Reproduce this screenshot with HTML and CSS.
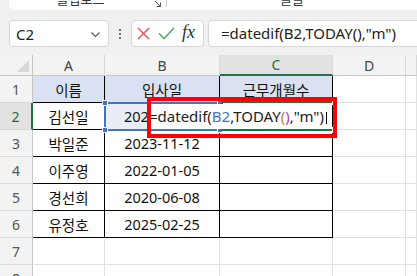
FILE: index.html
```html
<!DOCTYPE html>
<html lang="ko">
<head>
<meta charset="utf-8">
<link rel="stylesheet" href="styles.css">
</head>
<body>
<div class="ribbon">
  <div class="group clip">
    <span class="glabel">클립보드</span>
    <svg class="launcher" width="8" height="8" viewBox="0 0 8 8"><path d="M0.5 0.5 L0.5 0 M7.5 7.5 L2 2 M7.5 3.5 L7.5 7.5 L3.5 7.5" stroke="#555" stroke-width="1" fill="none"/></svg>
  </div>
  <div class="group font">
    <span class="glabel">글꼴</span>
  </div>
</div>

<div class="fbar">
  <div class="namebox">
    <span class="ref">C2</span>
    <svg class="chev" width="9" height="6" viewBox="0 0 9 6"><path d="M0.5 0.5 L4.5 4.5 L8.5 0.5" stroke="#555" stroke-width="1.1" fill="none"/></svg>
  </div>
  <div class="dots"><i></i><i></i><i></i></div>
  <div class="fxbox">
    <svg class="x" width="13" height="13" viewBox="0 0 13 13"><path d="M1 1 L12 12 M12 1 L1 12" stroke="#e8484c" stroke-width="1.3" fill="none"/></svg>
    <svg class="ok" width="17" height="13" viewBox="0 0 17 13"><path d="M1 6.5 L6 11.5 L16 1" stroke="#3aa856" stroke-width="1.3" fill="none"/></svg>
    <span class="fx">fx</span>
  </div>
  <div class="formula">=datedif(B2,TODAY(),"m")</div>
</div>

<div class="sheet">
  <div class="grid">
    <div class="corner"><span class="tri"></span></div>
    <div class="ch">A</div>
    <div class="ch">B</div>
    <div class="ch sel">C</div>
    <div class="ch">D</div>
    <div class="ch"></div>

    <div class="rh">1</div>
    <div class="c t hd bl">이름</div>
    <div class="c t hd bl">입사일</div>
    <div class="c t hd">근무개월수</div>
    <div class="c"></div>
    <div class="c"></div>

    <div class="rh rsel">2</div>
    <div class="c t bl">김선일</div>
    <div class="c t bl refcell">202</div>
    <div class="c t"></div>
    <div class="c"></div>
    <div class="c"></div>

    <div class="rh">3</div>
    <div class="c t bl">박일준</div>
    <div class="c t bl">2023-11-12</div>
    <div class="c t"></div>
    <div class="c"></div>
    <div class="c"></div>

    <div class="rh">4</div>
    <div class="c t bl">이주영</div>
    <div class="c t bl">2022-01-05</div>
    <div class="c t"></div>
    <div class="c"></div>
    <div class="c"></div>

    <div class="rh">5</div>
    <div class="c t bl">경선희</div>
    <div class="c t bl">2020-06-08</div>
    <div class="c t"></div>
    <div class="c"></div>
    <div class="c"></div>

    <div class="rh">6</div>
    <div class="c t bl">유정호</div>
    <div class="c t bl">2025-02-25</div>
    <div class="c t"></div>
    <div class="c"></div>
    <div class="c"></div>

    <div class="rh">7</div>
    <div class="c"></div><div class="c"></div><div class="c"></div><div class="c"></div><div class="c"></div>

    <div class="rh">8</div>
    <div class="c"></div><div class="c"></div><div class="c"></div><div class="c"></div><div class="c"></div>
  </div>

  <div class="refbox"><i class="h h1"></i><i class="h h2"></i><i class="h h3"></i><i class="h h4"></i></div>
  <div class="activebox"><i class="g g1"></i><i class="g g2"></i></div>
  <div class="editor">=datedif(<span class="r">B2</span>,TODAY<span class="p1">(</span><span class="p2">)</span>,"m")<span class="caret"></span></div>
  <div class="redbox"></div>
</div>
</body>
</html>
```
FILE: styles.css
```css
* { box-sizing: border-box; }
html, body { margin: 0; padding: 0; }
body {
  width: 417px;
  height: 276px;
  overflow: hidden;
  background: #f0f0f0;
  font-family: "Noto Sans", "Noto Sans CJK KR", sans-serif;
  color: #222;
}

/* ribbon */
.ribbon {
  height: 10px;
  margin-left: 9px;
  display: flex;
  background: #fff;
  border-radius: 0 0 0 6px;
  overflow: hidden;
}
.group {
  position: relative;
  height: 10px;
  display: flex;
  justify-content: center;
}
.group.clip { width: 158px; border-right: 1px solid #c8c8c8; height: 7px; }
.group.font { width: 250px; }
.glabel {
  font-size: 13px;
  line-height: 13px;
  margin-top: -7px;
  color: #333;
}
.group.clip .glabel { margin-left: -14px; }
.launcher { position: absolute; right: 5px; top: -1px; }

/* formula bar */
.fbar {
  margin-top: 10px;
  height: 27px;
  display: flex;
  align-items: stretch;
  padding-left: 9px;
}
.namebox {
  width: 100px;
  background: #fff;
  border: 1px solid #d6d6d6;
  border-radius: 4px;
  display: flex;
  align-items: center;
  justify-content: space-between;
  padding: 0 8px 0 6px;
}
.ref { font-size: 15px; color: #222; }
.chev { margin-top: 2px; }
.dots {
  width: 22px;
  display: flex;
  flex-direction: column;
  align-items: center;
  justify-content: center;
  gap: 2px;
}
.dots i { width: 2px; height: 2px; background: #444; border-radius: 1px; display: block; }
.fxbox {
  width: 73px;
  background: #fff;
  border: 1px solid #d6d6d6;
  border-radius: 4px;
  display: flex;
  align-items: center;
  padding-left: 5px;
}
.fxbox .x { margin-right: 8px; }
.fxbox .ok { margin-right: 7px; }
.fx {
  font-family: "Liberation Serif", serif;
  font-style: italic;
  font-size: 18px;
  color: #333;
  margin-top: -2px;
}
.formula {
  flex: 1;
  margin-left: 4px;
  background: #fff;
  border: 1px solid #d6d6d6;
  border-right: none;
  border-radius: 4px 0 0 4px;
  font-size: 15px;
  line-height: 25px;
  padding-left: 12px;
  white-space: nowrap;
  color: #222;
}

/* sheet */
.sheet {
  position: relative;
  margin-top: 8px;
  background: #fff;
}
.grid {
  display: grid;
  grid-template-columns: 33px 72px 115px 113px 73px 1fr;
  grid-template-rows: 21px repeat(8, 27px);
}
.corner {
  background: #f3f3f3;
  border-right: 1px solid #c6c6c6;
  border-bottom: 1px solid #c6c6c6;
  position: relative;
}
.tri {
  position: absolute;
  right: 3px;
  bottom: 3px;
  width: 0; height: 0;
  border-left: 12px solid transparent;
  border-bottom: 12px solid #d8d8d8;
}
.ch {
  background: #f3f3f3;
  border-right: 1px solid #d8d8d8;
  border-bottom: 1px solid #c6c6c6;
  font-size: 14px;
  color: #444;
  display: flex;
  align-items: center;
  justify-content: center;
}
.ch.sel {
  background: #e2e2e2;
  color: #217346;
  border-bottom: 2px solid #217346;
}
.rh {
  background: #f3f3f3;
  border-right: 1px solid #c6c6c6;
  border-bottom: 1px solid #d8d8d8;
  font-size: 14px;
  color: #555;
  display: flex;
  align-items: center;
  justify-content: center;
}
.rh.rsel {
  background: #e2e2e2;
  color: #1e6b41;
  border-right: 2px solid #217346;
}
.c {
  border-right: 1px solid #e1e1e1;
  border-bottom: 1px solid #e1e1e1;
  font-size: 14.5px;
  display: flex;
  align-items: center;
  justify-content: center;
  white-space: nowrap;
  overflow: hidden;
  color: #111;
}
.c.t { border-right-color: #000; border-bottom-color: #000; }
.c.hd { background: #d9e1f2; }
.refcell { background: #e8edf6; justify-content: flex-start; padding-left: 19px; }

/* overlays */
.refbox {
  position: absolute;
  left: 104px;
  top: 47px;
  width: 117px;
  height: 29px;
  border: 2px solid #4472c4;
}
.h {
  position: absolute;
  width: 6px; height: 6px;
  background: #4472c4;
  border: 1px solid #fff;
}
.h1 { left: -4px; top: -4px; }
.h2 { right: -4px; top: -4px; }
.h3 { left: -4px; bottom: -4px; }
.h4 { right: -4px; bottom: -4px; }
.activebox {
  position: absolute;
  left: 221px;
  top: 46px;
  width: 115px;
  height: 30px;
  border: 2px solid #217346;
}
.g { position: absolute; width: 6px; height: 6px; background: #217346; border: 1px solid #fff; }
.g1 { right: -4px; top: -4px; }
.g2 { right: -4px; bottom: -4px; }
.editor {
  position: absolute;
  left: 148px;
  top: 49px;
  width: 184px;
  height: 25px;
  background: #fff;
  font-size: 15px;
  line-height: 25px;
  padding-left: 1px;
  white-space: nowrap;
  color: #222;
}
.editor .r { color: #4472c4; }
.editor .p1 { color: #c9803c; }
.editor .p2 { color: #a04bb0; }
.caret {
  display: inline-block;
  width: 1px;
  height: 12px;
  background: #000;
  vertical-align: middle;
  margin-left: 2px;
}
.redbox {
  position: absolute;
  left: 147px;
  top: 42px;
  width: 190px;
  height: 41px;
  border: 4px solid #ff0000;
}
```
